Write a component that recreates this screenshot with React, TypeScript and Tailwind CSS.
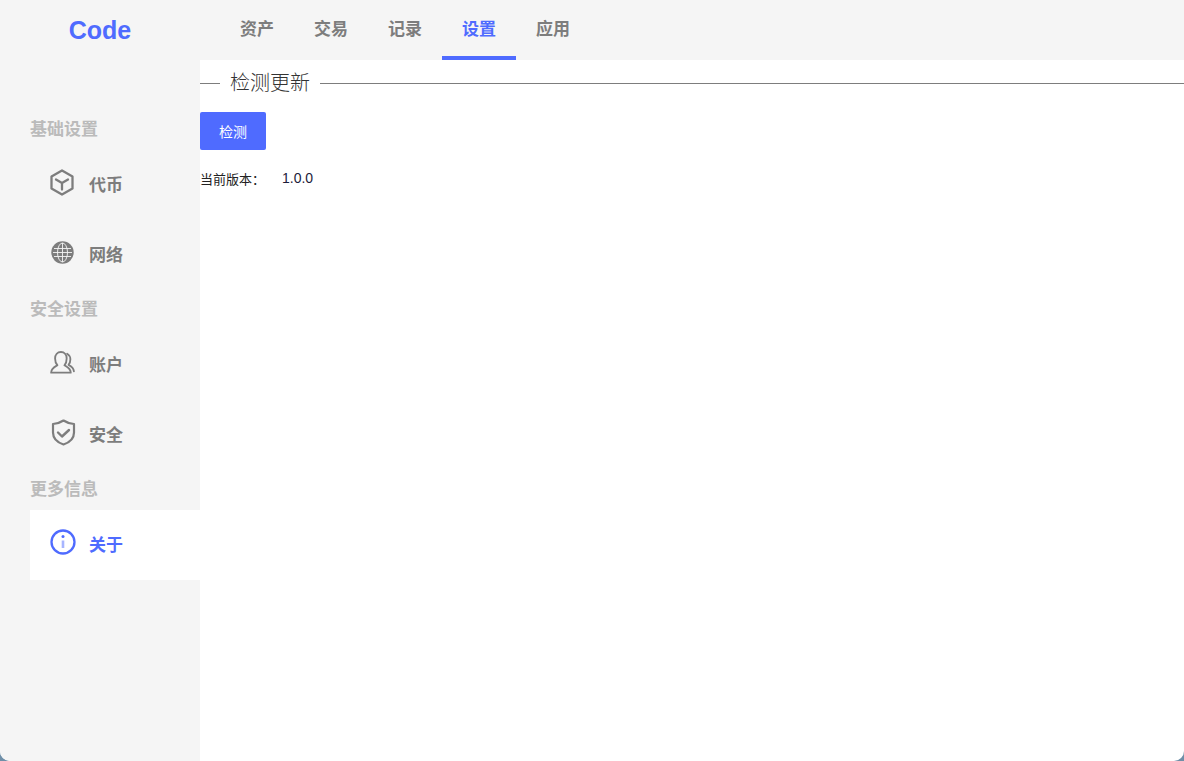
import type { ReactNode } from "react";

const FONT = "font-['Liberation_Sans','Noto_Sans_CJK_SC',sans-serif]";

const tabs = ["资产", "交易", "记录", "设置", "应用"];

const CubeIcon = () => (
  <svg width="24" height="27" viewBox="0 0 24 27" fill="none" stroke="currentColor" strokeWidth="2.3" strokeLinejoin="round" strokeLinecap="round">
    <path d="M12 1.5 L22.5 7.5 V19.5 L12 25.5 L1.5 19.5 V7.5 Z" />
    <path d="M6 10.5 L12 14 L18 10.5 M12 14 V20.5" />
  </svg>
);

const GlobeIcon = () => (
  <svg width="23" height="23" viewBox="0 0 23 23" fill="currentColor">
    <circle cx="11.5" cy="11.5" r="11.2" />
    <g fill="none" stroke="#f5f5f5" strokeWidth="0.9">
      <ellipse cx="11.5" cy="11.5" rx="5" ry="9.5" />
      <path d="M11.5 2 V21 M3 7.5 H20 M2 11.5 H21 M3 15.5 H20" />
    </g>
  </svg>
);

const UserIcon = () => (
  <svg width="27" height="25" viewBox="0 0 27 25" fill="none" stroke="currentColor" strokeWidth="2" strokeLinejoin="round" strokeLinecap="round">
    <path d="M1.2 23.5 C1.2 19 4.5 17.5 8 15.5 C6 13.5 5.5 11 5.5 8.2 C5.5 4 8 1.2 11.8 1.2 C15.6 1.2 18 4 18 8.2 C18 11 17.5 13.5 15.6 15.5 C19 17.5 22.4 19 22.4 23.5 Z" />
    <path d="M18.5 3 C21 4.5 22 6.5 22 9 C22 11.5 21.5 13.5 20 15 C23 16.5 25.6 18.5 25.8 22" />
  </svg>
);

const ShieldIcon = () => (
  <svg width="25" height="27" viewBox="0 0 25 27" fill="none" stroke="currentColor" strokeWidth="2.2" strokeLinejoin="round" strokeLinecap="round">
    <path d="M12.5 1.5 C15.5 3.5 19 4.7 23 5 V13.5 C23 19.5 18.5 23.5 12.5 25.5 C6.5 23.5 2 19.5 2 13.5 V5 C6 4.7 9.5 3.5 12.5 1.5 Z" />
    <path d="M7 13.5 L11 17.5 L18 11" strokeWidth="2.4" />
  </svg>
);

const InfoIcon = () => (
  <svg width="26" height="26" viewBox="0 0 26 26" fill="none" stroke="currentColor">
    <circle cx="13" cy="13" r="11.5" strokeWidth="2.3" />
    <path d="M13 11.5 V19" strokeWidth="2.6" opacity="0.5" />
    <circle cx="13" cy="7.5" r="1.5" fill="currentColor" stroke="none" />
  </svg>
);

const SideItem = ({ icon, label, active, iconClass }: { icon: ReactNode; label: string; active?: boolean; iconClass: string }) => (
  <div className={`flex h-[70px] ml-[30px] items-center pl-5 ${active ? "bg-white text-[#4f6bff]" : "text-[#7d7d7d]"}`}>
    <span className={`flex w-[26px] justify-center ${iconClass}`}>{icon}</span>
    <span className="mt-0.5 ml-[13px] text-[17px] leading-6 font-bold">{label}</span>
  </div>
);

const SideTitle = ({ label }: { label: string }) => (
  <div className="ml-[30px] h-10 text-[17px] leading-10 font-bold text-[#bbbbbb]">{label}</div>
);

export default function App() {
  return (
    <div className={`h-[761px] w-[1184px] overflow-hidden bg-[#6f8fa8] ${FONT}`}>
      <div className="flex h-full flex-col overflow-hidden rounded-b-[10px] bg-white">
        <header className="flex h-[60px] shrink-0 bg-[#f5f5f5]">
          <div className="flex w-[200px] items-center justify-center pt-0.5 text-[25px] font-bold text-[#4f6bff]">Code</div>
          <nav className="flex pl-5">
            {tabs.map((t) => (
              <div
                key={t}
                className={`flex w-[74px] items-center justify-center border-b-4 pt-[3px] text-[17px] font-bold ${
                  t === "设置" ? "border-[#4f6bff] text-[#4f6bff]" : "border-transparent text-[#7d7d7d]"
                }`}
              >
                {t}
              </div>
            ))}
          </nav>
        </header>
        <div className="flex flex-1">
          <aside className="w-[200px] shrink-0 bg-[#f5f5f5] pt-[50px]">
            <SideTitle label="基础设置" />
            <SideItem icon={<CubeIcon />} label="代币" iconClass="-mt-1.5 pr-0.5" />
            <SideItem icon={<GlobeIcon />} label="网络" iconClass="-mt-1.5 pr-0.5" />
            <SideTitle label="安全设置" />
            <SideItem icon={<UserIcon />} label="账户" iconClass="-mt-1.5 pr-px" />
            <SideItem icon={<ShieldIcon />} label="安全" iconClass="-mt-1.5" />
            <SideTitle label="更多信息" />
            <SideItem icon={<InfoIcon />} label="关于" active iconClass="-mt-1.5" />
          </aside>
          <main className="flex-1">
            <div className="flex h-[46px] items-center">
              <span className="h-px w-5 bg-[#7d7d7d]" />
              <span className="px-2.5 text-xl leading-[46px] font-light text-[#333]">检测更新</span>
              <span className="h-px flex-1 bg-[#7d7d7d]" />
            </div>
            <button className="mt-1.5 h-[38px] w-[66px] rounded-[2px] bg-[#4f6bff] pt-px text-sm text-white">检测</button>
            <div className="mt-[19px] flex h-[21px] items-start text-[13px] leading-[20px] text-[#222]">
              <span className="mt-px w-[82px]">当前版本：</span>
              <span className="-mt-px text-sm text-[#1c1c3a]">1.0.0</span>
            </div>
          </main>
        </div>
      </div>
    </div>
  );
}
